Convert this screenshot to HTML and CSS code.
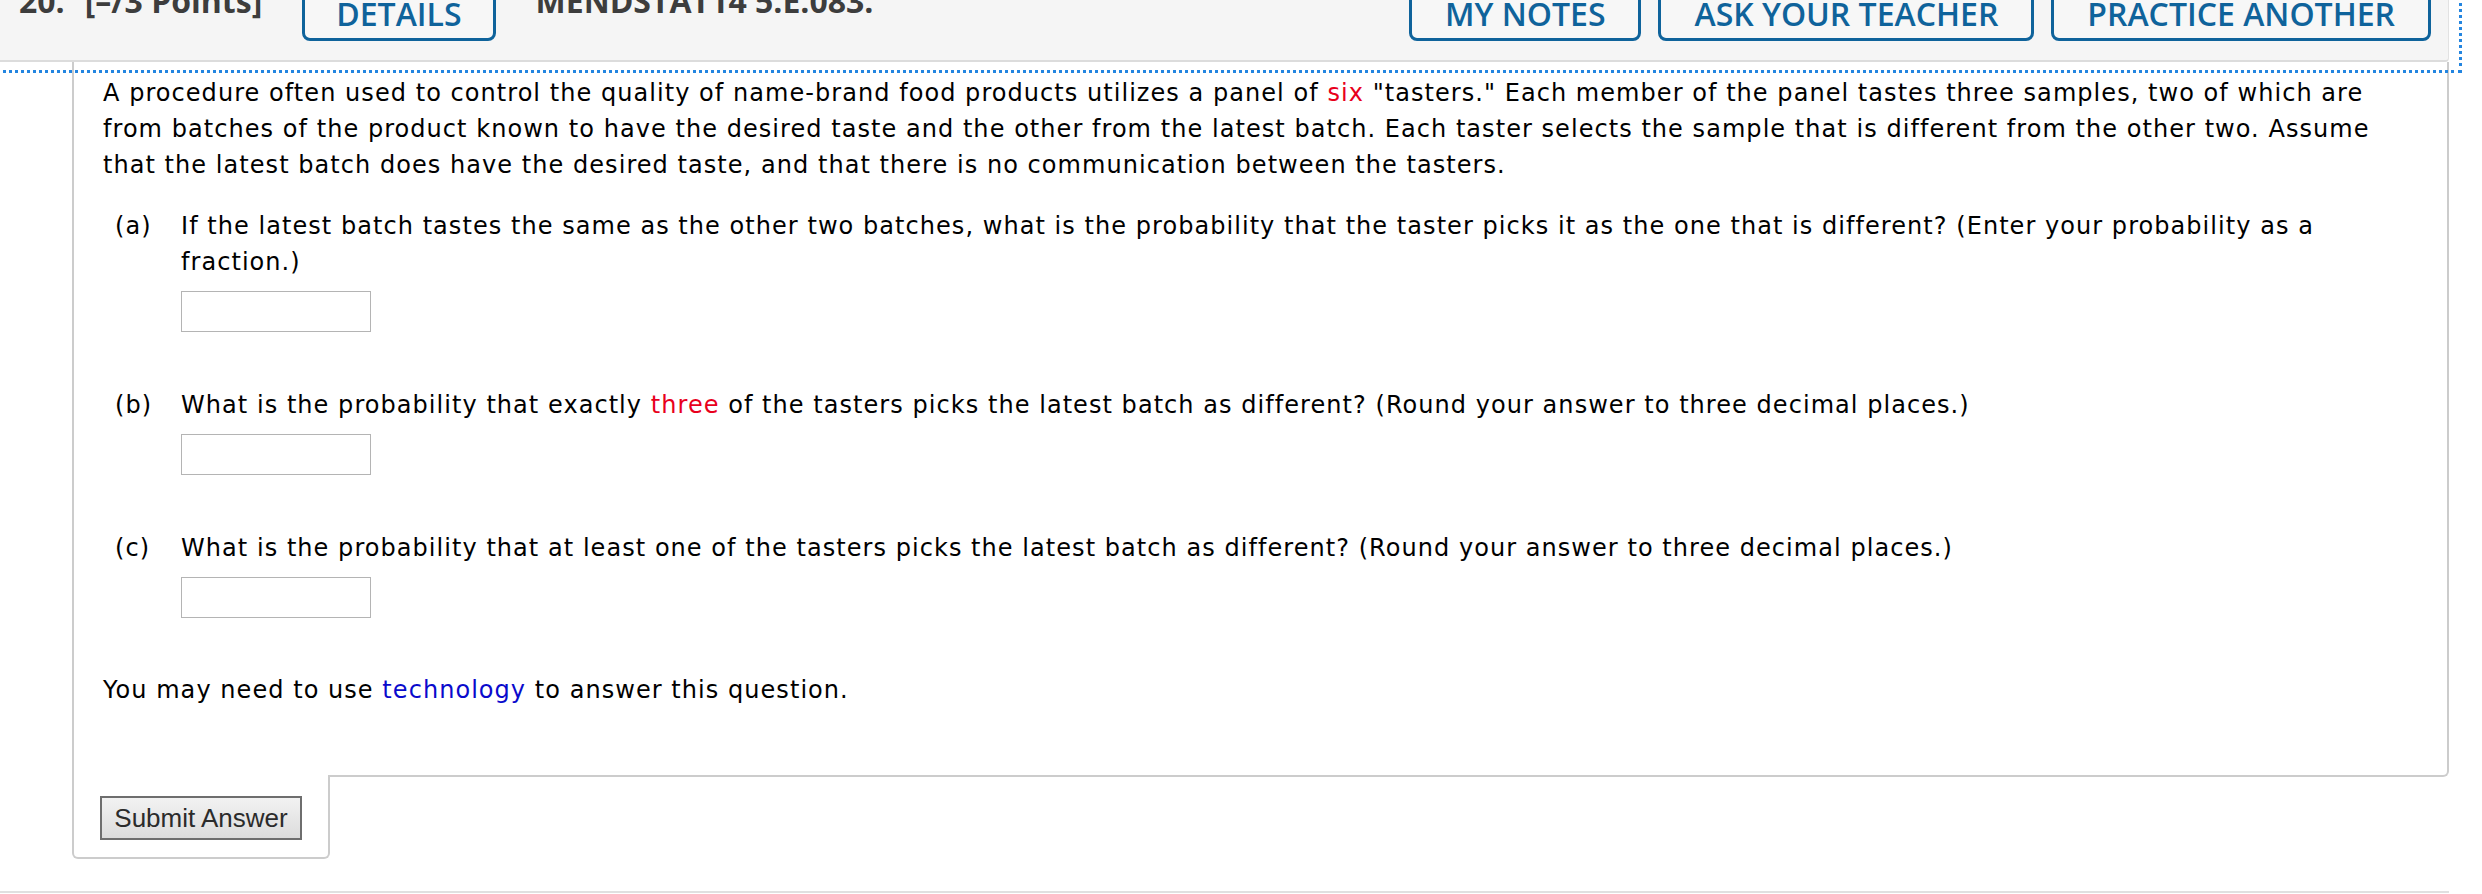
FILE: index.html
```html
<!DOCTYPE html>
<html lang="en">
<head>
<meta charset="utf-8">
<title>Question 20</title>
<link rel="stylesheet" href="styles.css">
</head>
<body>
<div class="page">
  <div class="focus-ring"></div>
  <header class="qhead">
    <span class="qnum">20.</span>
    <span class="qpts">[–/3 Points]</span>
    <button class="hbtn hbtn-details">DETAILS</button>
    <span class="qcode">MENDSTAT14 5.E.083.</span>
    <div class="hactions">
      <button class="hbtn">MY NOTES</button>
      <button class="hbtn">ASK YOUR TEACHER</button>
      <button class="hbtn">PRACTICE ANOTHER</button>
    </div>
  </header>
  <section class="panel">
    <p class="intro">A procedure often used to control the quality of name-brand food products utilizes a panel of <span class="red">six</span> "tasters." Each member of the panel tastes three samples, two of which are from batches of the product known to have the desired taste and the other from the latest batch. Each taster selects the sample that is different from the other two. Assume that the latest batch does have the desired taste, and that there is no communication between the tasters.</p>
    <div class="part part-first">
      <span class="plabel">(a)</span>
      <div class="pbody">
        <p class="ptext">If the latest batch tastes the same as the other two batches, what is the probability that the taster picks it as the one that is different? (Enter your probability as a fraction.)</p>
        <input class="answer" type="text">
      </div>
    </div>
    <div class="part">
      <span class="plabel">(b)</span>
      <div class="pbody">
        <p class="ptext">What is the probability that exactly <span class="red">three</span> of the tasters picks the latest batch as different? (Round your answer to three decimal places.)</p>
        <input class="answer" type="text">
      </div>
    </div>
    <div class="part">
      <span class="plabel">(c)</span>
      <div class="pbody">
        <p class="ptext">What is the probability that at least one of the tasters picks the latest batch as different? (Round your answer to three decimal places.)</p>
        <input class="answer" type="text">
      </div>
    </div>
    <p class="tech">You may need to use <a class="tech-link">technology</a> to answer this question.</p>
  </section>
  <div class="submit-tab"><button class="submit">Submit Answer</button></div>
  <div class="bottom-rule"></div>
</div>
</body>
</html>
```
FILE: styles.css
```css
html, body {
  margin: 0;
  padding: 0;
  background: #ffffff;
}

.page {
  position: relative;
  width: 2449px;
  font-family: "DejaVu Sans", Verdana, sans-serif;
  font-size: 24px;
  line-height: 36px;
  letter-spacing: 1.05px;
  color: #000000;
}

.focus-ring {
  position: absolute;
  left: -10px;
  top: -10px;
  width: 2472px;
  height: 83px;
  box-sizing: border-box;
  border: 3px dotted #2385e0;
  pointer-events: none;
  z-index: 5;
}

/* header bar */
.qhead {
  display: flex;
  align-items: flex-start;
  height: 60px;
  padding-left: 15px;
  background: #f5f5f5;
  border-bottom: 2px solid #dcdcdc;
  border-right: 1px solid #e2e2e2;
  border-bottom-right-radius: 4px;
  overflow: hidden;
  font-family: "Open Sans", sans-serif;
  letter-spacing: 0;
}

.qnum,
.qpts,
.qcode {
  font-weight: 700;
  font-size: 32px;
  line-height: 32px;
  color: #3d3d3d;
  margin-top: -15px;
  white-space: nowrap;
}

.qnum {
  margin-left: 4px;
}

.qpts {
  margin-left: 20px;
}

.qcode {
  margin-left: 40px;
}

.hbtn {
  display: flex;
  align-items: flex-end;
  box-sizing: border-box;
  height: 70px;
  margin-top: -29px;
  padding: 0 33px 8px;
  font-family: "Open Sans", sans-serif;
  font-weight: 600;
  font-size: 32px;
  line-height: 32px;
  letter-spacing: 0;
  color: #0f639b;
  background: #f7f7f7;
  border: 3px solid #0f639b;
  border-radius: 8px;
  white-space: nowrap;
}

.hbtn-details {
  margin-left: 40px;
  padding-left: 31px;
  padding-right: 31px;
}

.hactions {
  display: flex;
  gap: 17px;
  margin-left: auto;
  padding-right: 17px;
}

/* question panel */
.panel {
  margin-left: 72px;
  padding: 13px 29px 67px 29px;
  border: 2px solid #cccccc;
  border-top: none;
  border-bottom-right-radius: 6px;
}

.intro,
.ptext,
.tech {
  margin: 0;
}

.red {
  color: #e8001c;
}

.part {
  display: grid;
  grid-template-columns: 66px 1fr;
  margin-left: 12px;
  margin-top: 55px;
}

.part-first {
  margin-top: 25px;
}

.answer {
  display: block;
  box-sizing: border-box;
  width: 190px;
  height: 41px;
  margin: 11px 0 0;
  padding: 0 6px;
  border: 1px solid #b4b4b4;
  background: #ffffff;
  font: inherit;
}

.tech {
  margin-top: 54px;
}

.tech-link {
  color: #0a0acc;
  text-decoration: none;
}

/* submit tab */
.submit-tab {
  position: relative;
  box-sizing: border-box;
  width: 258px;
  margin-left: 72px;
  margin-top: -2px;
  padding: 21px 26px 17px;
  background: #ffffff;
  border: 2px solid #cccccc;
  border-top: none;
  border-radius: 0 0 6px 6px;
}

.submit {
  display: block;
  box-sizing: border-box;
  width: 202px;
  height: 44px;
  padding: 0;
  border: 2px solid #6e6e6e;
  border-radius: 0;
  background: linear-gradient(#f2f2f2, #dcdcdc);
  font-family: "Liberation Sans", Arial, sans-serif;
  font-size: 26px;
  letter-spacing: 0;
  color: #2b2b2b;
}

.bottom-rule {
  height: 2px;
  margin-top: 32px;
  background: #e0e0e0;
}
```
